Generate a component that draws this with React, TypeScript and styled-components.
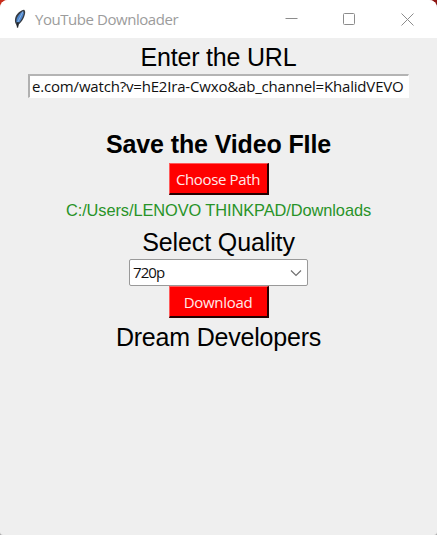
import React from "react";
import styled, { createGlobalStyle } from "styled-components";

const GlobalStyle = createGlobalStyle`
  * { box-sizing: border-box; }
  html, body { margin: 0; height: 100%; overflow: hidden; background: #b3261c; }
  #root { height: 100%; }
`;

const uiFont = `"Open Sans", "Noto Sans", sans-serif`;

const Window = styled.div`
  width: 437px;
  height: 535px;
  display: flex;
  flex-direction: column;
  background: #efefef;
  border-radius: 8px 8px 3px 3px;
  overflow: hidden;
`;

const Desktop = styled.div`
  width: 437px;
  height: 535px;
  background: linear-gradient(to bottom, transparent 20px, #a8a8a8 20px),
    linear-gradient(to right, #c92d1c, #8f1714);
`;

const TitleBar = styled.header`
  flex: none;
  height: 38px;
  display: flex;
  align-items: center;
  background: #fff;
  padding: 0 1px 0 13px;
`;

const Title = styled.span<{ $spacing: number }>`
  flex: 1;
  margin-left: 9px;
  font: 400 15px/20px ${uiFont};
  letter-spacing: ${(p) => p.$spacing}px;
  color: #9c9c9c;
  white-space: nowrap;
  padding-bottom: 1px;
`;

const WindowControl = styled.button`
  width: 58px;
  height: 38px;
  flex: none;
  display: flex;
  align-items: center;
  justify-content: center;
  padding: 0;
  border: 0;
  background: none;
`;

const Content = styled.main`
  display: flex;
  flex-direction: column;
  align-items: center;
`;

const Label = styled.div<{ $height: number; $spacing?: number; $bold?: boolean }>`
  height: ${(p) => p.$height}px;
  font: ${(p) => (p.$bold ? "700 25px/37px" : "400 25px/38px")} "Liberation Sans", Arial, sans-serif;
  letter-spacing: ${(p) => p.$spacing ?? 0}px;
  color: #000;
  white-space: nowrap;
`;

const Entry = styled.div`
  width: 381px;
  height: 24px;
  margin-bottom: 28px;
  padding-left: 2px;
  border: 1px solid #fff;
  border-top: 2px solid #b4b4b4;
  border-left: 2px solid #b0b0b0;
  background: #fff;
  font: 15px/21px ${uiFont};
  letter-spacing: -0.18px;
  color: #111;
  white-space: nowrap;
  overflow: hidden;
`;

const PlainGlyph = styled.span`
  font-family: "Liberation Sans", Arial, sans-serif;
`;

const PushButton = styled.button<{ $spacing: number }>`
  width: 100px;
  height: 32px;
  padding: 0;
  border: solid;
  border-width: 1px 2px 2px 1px;
  border-color: #ff5a5a #240000 #240000 #ff5a5a;
  background: #f00;
  font: 15px/28px ${uiFont};
  letter-spacing: ${(p) => p.$spacing}px;
  color: #ffe9e9;
  white-space: nowrap;
`;

const PathText = styled.div`
  height: 28px;
  font: 16.4px/30px "Liberation Sans", Arial, sans-serif;
  letter-spacing: -0.09px;
  color: #289328;
  white-space: nowrap;
`;

const Combo = styled.div`
  width: 179px;
  height: 27px;
  display: flex;
  align-items: center;
  justify-content: space-between;
  padding: 0 5px 0 3px;
  border: 1px solid #999;
  border-radius: 2px;
  background: #fff;
  font: 15px/25px ${uiFont};
  letter-spacing: -0.9px;
  color: #111;
`;

function Feather() {
  return (
    <svg width="13" height="20" viewBox="0 0 13 20">
      <path d="M11 .7C8 1.2 4.200 4 2.500 8c-.9 2.600-.8 5.500 .6 7.500L4.500 19l1.200-3.500c3.800-3 6.600-8.800 6.500-12.500C12.100 2 11.700 1 11 .7Z" fill="#363b42" />
      <path d="M9.800 2.200C7 4 4.500 7 3.600 10l-.2 3 1.800 1.200C8 12 10.300 7.500 10.900 4Z" fill="#4c86cf" />
      <path d="M10 2.500 4.800 13" stroke="#8fb4e0" strokeWidth=".9" fill="none" />
      <path d="M4.500 18.500 5 13" stroke="#20242a" strokeWidth="1.400" fill="none" />
    </svg>
  );
}

export default function App() {
  return (
    <Desktop>
      <GlobalStyle />
      <Window>
        <TitleBar>
          <Feather />
          <Title $spacing={-0.45}>YouTube Downloader</Title>
          <WindowControl aria-label="Minimize">
            <svg width="13" height="13" stroke="#8c8c8c"><path d="M.5 5.500h12" /></svg>
          </WindowControl>
          <WindowControl aria-label="Maximize">
            <svg width="13" height="13" stroke="#8c8c8c" fill="none"><rect x=".5" y=".5" width="11" height="11" rx="1" /></svg>
          </WindowControl>
          <WindowControl aria-label="Close">
            <svg width="13" height="13" stroke="#8c8c8c"><path d="M.5.5l12 12M12.500.5l-12 12" /></svg>
          </WindowControl>
        </TitleBar>
        <Content>
          <Label $height={36} $spacing={-0.2}>Enter the URL</Label>
          <Entry>
            e.com/watch?v=hE2<PlainGlyph>I</PlainGlyph>ra-Cwxo&amp;ab_channel=KhalidVEVO
          </Entry>
          <Label $height={37} $bold $spacing={-0.13}>Save the Video FIle</Label>
          <PushButton $spacing={-0.35}>Choose Path</PushButton>
          <PathText>C:/Users/LENOVO THINKPAD/Downloads</PathText>
          <Label $height={36} $spacing={-0.12}>Select Quality</Label>
          <Combo>
            720p
            <svg width="12" height="8" fill="none" stroke="#707070" strokeWidth="1.200"><path d="M1 1.500 6 6.500l5-5" /></svg>
          </Combo>
          <PushButton $spacing={-0.3}>Download</PushButton>
          <Label $height={37} $spacing={-0.2}>Dream Developers</Label>
        </Content>
      </Window>
    </Desktop>
  );
}
